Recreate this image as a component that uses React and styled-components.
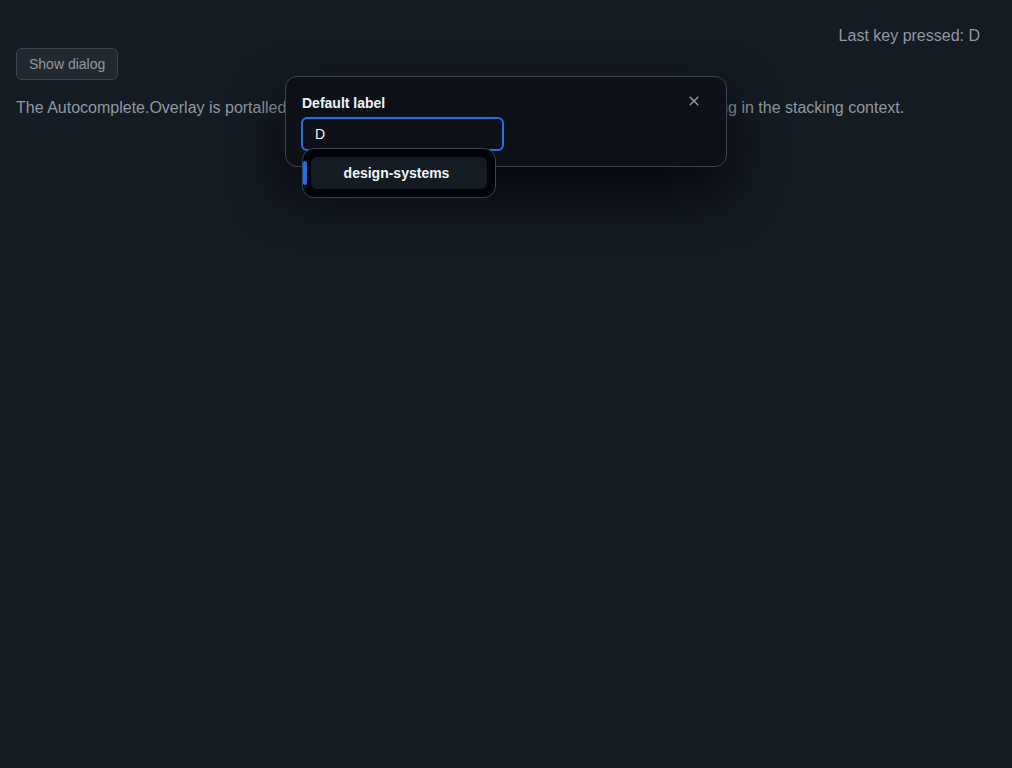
import React from "react";
import styled, { createGlobalStyle } from "styled-components";

const GlobalStyle = createGlobalStyle`
    html, body {
        margin: 0;
        padding: 0;
        background: #151b23;
        font-family: "Liberation Sans", Arial, sans-serif;
        color: #9198a1;
    }
`;

const Page = styled.div`
    position: relative;
    width: 100%;
    min-height: 768px;
    padding: 16px;
    box-sizing: border-box;
`;

const KeyStatus = styled.div`
    display: flex;
    justify-content: flex-end;
    padding-right: 16px;
    font-size: 16px;
    line-height: 24px;
    margin-top: 8px;
    color: #9198a1;
`;

const ShowButton = styled.button`
    display: block;
    margin-top: 0;
    height: 32px;
    padding: 0 12px;
    border: 1px solid #3d444d;
    border-radius: 6px;
    background: #212830;
    color: #9198a1;
    font-family: "Liberation Sans", Arial, sans-serif;
    font-size: 14px;
    cursor: pointer;
`;

const Note = styled.p`
    margin: 16px 0 0;
    font-size: 16px;
    line-height: 24px;
    color: #9198a1;
    white-space: nowrap;
`;

const Dialog = styled.div`
    position: absolute;
    left: 285px;
    top: 76px;
    width: 442px;
    height: 91px;
    box-sizing: border-box;
    padding: 16px 16px 0 16px;
    background: #0d1117;
    border: 1px solid #3d444d;
    border-radius: 12px;
    box-shadow: 0 24px 56px 0 rgba(1, 4, 9, 0.85);
    display: flex;
    justify-content: space-between;
    align-items: flex-start;
`;

const Field = styled.div`
    display: flex;
    flex-direction: column;
    gap: 4px;
`;

const Label = styled.label`
    font-size: 14px;
    font-weight: 700;
    line-height: 20px;
    color: #f0f6fc;
`;

const Input = styled.div`
    width: 203px;
    height: 34px;
    box-sizing: border-box;
    margin-left: -1px;
    border: 2px solid #1f6feb;
    border-radius: 6px;
    padding: 0 12px;
    display: flex;
    align-items: center;
    font-size: 14px;
    color: #f0f6fc;
`;

const CloseButton = styled.button`
    width: 32px;
    height: 32px;
    margin: -8px 0 0 0;
    border: none;
    background: transparent;
    color: #9198a1;
    display: flex;
    align-items: center;
    justify-content: center;
    padding: 0;
    cursor: pointer;
`;

const Overlay = styled.div`
    position: absolute;
    left: 302px;
    top: 148px;
    width: 194px;
    height: 50px;
    box-sizing: border-box;
    background: #010409;
    border: 1px solid #3d444d;
    border-radius: 12px;
    padding: 8px 8px;
`;

const Option = styled.div`
    position: relative;
    height: 32px;
    border-radius: 6px;
    background: ${(p) => (p.$active ? "#151b23" : "transparent")};
    display: flex;
    align-items: center;
    justify-content: center;
    padding-right: 5px;
    font-size: 14px;
    font-weight: 700;
    color: #f0f6fc;

    &::before {
        content: "";
        display: ${(p) => (p.$active ? "block" : "none")};
        position: absolute;
        left: -8px;
        top: 4px;
        width: 4px;
        height: 24px;
        border-radius: 6px;
        background: #1f6feb;
    }
`;

const XIcon = () => (
    <svg width="16" height="16" viewBox="0 0 16 16" fill="currentColor">
        <path d="M3.72 3.72a.75.75 0 0 1 1.06 0L8 6.94l3.22-3.22a.749.749 0 0 1 1.275.326.749.749 0 0 1-.215.734L9.06 8l3.22 3.22a.749.749 0 0 1-.326 1.275.749.749 0 0 1-.734-.215L8 9.06l-3.22 3.22a.751.751 0 0 1-1.042-.018.751.751 0 0 1-.018-1.042L6.94 8 3.72 4.78a.75.75 0 0 1 0-1.06Z" />
    </svg>
);

export default function App() {
    return (
        <>
            <GlobalStyle />
            <Page>
                <KeyStatus>Last key pressed: D</KeyStatus>
                <ShowButton>Show dialog</ShowButton>
                <Note>
                    The Autocomplete.Overlay is portalled to the body, so it will never be clipped by the Dialog or anything in the stacking context.
                </Note>
                <Dialog>
                    <Field>
                        <Label>Default label</Label>
                        <Input>D</Input>
                    </Field>
                    <CloseButton aria-label="Close">
                        <XIcon />
                    </CloseButton>
                </Dialog>
                <Overlay>
                    <Option $active>design-systems</Option>
                </Overlay>
            </Page>
        </>
    );
}
